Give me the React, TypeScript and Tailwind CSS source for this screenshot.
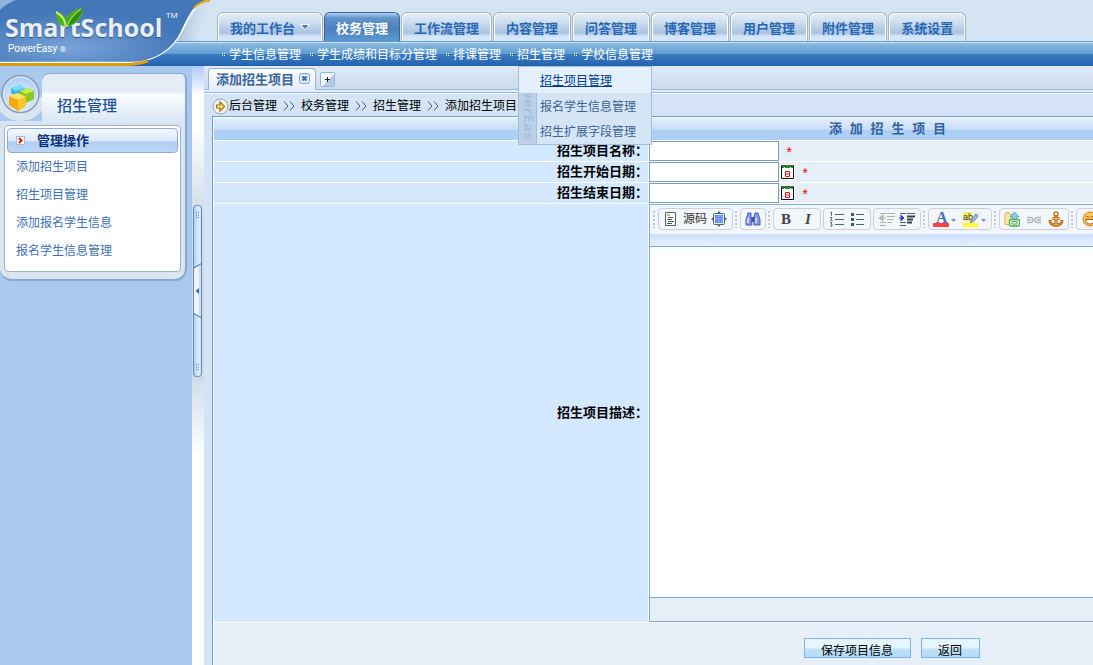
import React from "react";

type Tab = { label: string; active?: boolean; menu?: boolean };

const tabs: Tab[] = [
  { label: "我的工作台", menu: true },
  { label: "校务管理", active: true },
  { label: "工作流管理" },
  { label: "内容管理" },
  { label: "问答管理" },
  { label: "博客管理" },
  { label: "用户管理" },
  { label: "附件管理" },
  { label: "系统设置" },
];

const subnav = ["学生信息管理", "学生成绩和目标分管理", "排课管理", "招生管理", "学校信息管理"];
const sideLinks = ["添加招生项目", "招生项目管理", "添加报名学生信息", "报名学生信息管理"];
const crumbs = ["后台管理", "校务管理", "招生管理", "添加招生项目"];

function Logo() {
  return (
    <div className="relative h-[66px] w-[217px] shrink-0">
      <svg className="absolute left-0 top-0" width="217" height="66" viewBox="0 0 217 66" aria-hidden="true">
        <defs>
          <radialGradient id="sky" cx="0.34" cy="0.75" r="0.55">
            <stop offset="0" stopColor="#78a3d8" />
            <stop offset="1" stopColor="#4377b8" />
          </radialGradient>
          <linearGradient id="shade" x1="0" x2="1" y1="0.3" y2="0.6">
            <stop offset="0" stopColor="#8fb0d0" />
            <stop offset="1" stopColor="#d5e4f2" stopOpacity="0" />
          </linearGradient>
        </defs>
        <path d="M206 2C192 9 187 27 177 41H196C203 28 204 12 210 4Z" fill="url(#shade)" />
        <path d="M0 0H208C190 5 187 23 178 38C167 54 152 62 130 63H0Z" fill="url(#sky)" />
        <path d="M0 0H16C10 2 5 5 0 10Z" fill="#8db3df" />
        <path d="M0 62.5H130C152 62 167 54 178 38C187 23 190 5 208 0" fill="none" stroke="#fff" strokeWidth="1.3" />
        <path d="M0 64.5H128C136 64 142 63 148 61" fill="none" stroke="#dd9b0e" strokeWidth="3" />
        <path d="M194 8C199 3 204 1 210 0.5" fill="none" stroke="#e8a91c" strokeWidth="2" />
      </svg>
      <div className="absolute left-[5px] top-[9px] whitespace-nowrap font-['Open_Sans',sans-serif] text-[25px] font-bold leading-9 text-[#eceff2] [text-shadow:0_1px_1px_#2d5588]">
        SmartSchool
      </div>
      <svg className="absolute left-[55px] top-[7px]" width="29" height="24" viewBox="0 0 29 24" aria-hidden="true">
        <path d="M1 5C5 6 10 8 11 13C12 8 18 2 28 1C27 11 21 19 10 20C4 18 1 13 1 5Z" fill="#4db417" />
        <path d="M11 19C12 11 19 4 28 1C25 11 19 18 11 19Z" fill="#2f8e12" />
        <path d="M1 5C7 8 10 13 11 20" fill="none" stroke="#c8f06a" strokeWidth="2" />
        <path d="M12 19C14 12 19 7 26 2" fill="none" stroke="#9ee04d" strokeWidth="1.5" />
      </svg>
      <div className="absolute left-[166px] top-[9px] font-['Open_Sans',sans-serif] text-[8px] leading-3 text-white">TM</div>
      <div className="absolute left-2 top-[43px] font-['Roboto',sans-serif] text-[10px] leading-3 text-white">
        PowerEasy <span className="text-[8px]">®</span>
      </div>
    </div>
  );
}

function Splitter() {
  return (
    <div className="w-3 shrink-0 bg-white">
      <div className="h-[390px] w-full bg-[linear-gradient(to_bottom,#b0c9fb_0,#ffffff_30px,#ffffff_60px,#cddce6_150px,#cfdde8_310px,#ffffff_390px)] px-px pt-[139px]">
        <button aria-label="收起侧栏" className="block">
          <svg width="9" height="172" viewBox="0 0 9 172">
            <defs>
              <linearGradient id="bar" x1="0" x2="1">
                <stop offset="0" stopColor="#a9cdf6" />
                <stop offset="0.7" stopColor="#e0effd" />
                <stop offset="1" stopColor="#c4def9" />
              </linearGradient>
            </defs>
            <rect x="0.5" y="0.5" width="8" height="171" rx="3" fill="url(#bar)" stroke="#5e89bd" />
            <path d="M1 63L8 59V113L1 109Z" fill="#edf4fd" />
            <path d="M6 62L8 60V112L6 110Z" fill="#c8dcf4" />
            <path d="M1 63L8.500 58.500M1 108.500L8.500 113" fill="none" stroke="#5e89bd" strokeWidth="1.3" />
            <path d="M6 83V89L2.500 86Z" fill="#3d6ba8" />
            <g fill="#4f86c6">
              <path d="M3 7h1v1h-1zM5 7h1v1h-1zM3 9.500h1v1h-1zM5 9.500h1v1h-1zM3 12h1v1h-1zM5 12h1v1h-1z" />
              <path d="M3 159h1v1h-1zM5 159h1v1h-1zM3 161.500h1v1h-1zM5 161.500h1v1h-1zM3 164h1v1h-1zM5 164h1v1h-1z" />
            </g>
          </svg>
        </button>
      </div>
    </div>
  );
}

function Sidebar() {
  return (
    <aside className="w-48 shrink-0 bg-[#a9c8ee] pt-[7px]">
      <div className="relative mr-[5px]">
        <div className="absolute left-0 top-6 h-6 w-[46px] overflow-hidden">
          <div className="-ml-[6px] -mt-[29px] size-[53px] rounded-full bg-[#d9e6f2]" />
        </div>
        <div className="relative ml-[42px] h-12 rounded-tl-lg rounded-tr-md border-r-2 border-t border-[#86a8d3] bg-[linear-gradient(to_bottom,#e4edf6_0,#e4edf6_18px,#fbfdfe_20px,#d9e6f2_48px)] pl-[15px] pt-5 text-[15px] font-medium leading-6 text-[#1f5199]">
          招生管理
        </div>
        <div className="relative rounded-b-xl border-b-2 border-r-2 border-[#86a8d3] bg-[#d9e6f2] px-1 pb-[7px] pt-1">
          <nav className="rounded-sm border border-[#9fb4ca] bg-white px-[2px] pb-[6px] pt-[2px]">
            <h2 className="flex h-[25px] items-center rounded border border-[#8fadd6] bg-[linear-gradient(to_bottom,#f4f8fe_0,#d9e7fb_12px,#b1cef3_13px,#bcd6f6_100%)] pl-2 text-[13px] font-bold text-[#0b3579]">
              <svg width="9" height="9" viewBox="0 0 9 9" className="mr-3 shrink-0" aria-hidden="true">
                <rect x="0.5" y="0.5" width="8" height="8" fill="#fff" stroke="#b8b8b8" />
                <path d="M3 2L5.500 4.500L3 7" fill="none" stroke="#cf1313" strokeWidth="1.8" />
              </svg>
              管理操作
            </h2>
            <ul className="pl-[9px]">
              {sideLinks.map((l) => (
                <li key={l} className="h-7 text-xs leading-[29px] text-[#3c6fb5]">
                  <a href="#">{l}</a>
                </li>
              ))}
            </ul>
          </nav>
        </div>
        <svg className="absolute left-0 top-0" width="42" height="43" viewBox="0 0 42 43" aria-hidden="true">
          <defs>
            <radialGradient id="orb" cx="0.5" cy="0.65" r="0.6">
              <stop offset="0" stopColor="#fbfdff" />
              <stop offset="1" stopColor="#a8cef5" />
            </radialGradient>
          </defs>
          <circle cx="20.500" cy="21" r="18.500" fill="url(#orb)" stroke="#8b9db3" strokeWidth="1.600" />
          <circle cx="20.500" cy="21" r="17" fill="none" stroke="#e8f1fa" />
          <path d="M11 15L20 12L25 15L24 21L14 23L11 20Z" fill="#38b8ec" />
          <path d="M11 15L20 12L25 15L16 18Z" fill="#7bdcfb" />
          <path d="M20 18L28 15L34 18V26L26 30L20 26Z" fill="#8cc91f" />
          <path d="M20 18L28 15L34 18L26 21Z" fill="#c6ee55" />
          <path d="M9 23L18 20L26 24V33L18 38L9 32Z" fill="#f4a80f" />
          <path d="M9 23L18 20L26 24L18 27Z" fill="#ffe467" />
          <path d="M18 27L26 24V33L18 38Z" fill="#fcc62d" />
        </svg>
      </div>
    </aside>
  );
}

function Grip() {
  return (
    <svg width="5" height="18" viewBox="0 0 5 18" className="shrink-0" aria-hidden="true">
      <path d="M2 1V18" stroke="#c3c8cf" strokeWidth="2" strokeDasharray="2 2" />
    </svg>
  );
}

function Group({ children }: { children: React.ReactNode }) {
  return (
    <div className="flex h-[22px] shrink-0 items-center gap-1 rounded-sm border border-[#cdd0d4] bg-[#f3f6fa] px-[5px]">
      {children}
    </div>
  );
}

function Tool({ label, width = 16, children }: { label: string; width?: number; children: React.ReactNode }) {
  return (
    <button type="button" aria-label={label} className="block shrink-0">
      <svg width={width} height="16" viewBox={`0 0 ${width} 16`}>{children}</svg>
    </button>
  );
}

function Toolbar() {
  return (
    <div className="flex h-[29px] items-center gap-px overflow-hidden bg-[#f1f6fc] pb-px pl-[2px]">
      <Grip />
      <Group>
        <button type="button" className="flex items-center gap-[6px] text-xs text-[#333]">
          <svg width="13" height="16" viewBox="0 0 13 16" aria-hidden="true">
            <path d="M1.500 1.500H11.500V14.500H1.500Z" fill="#fff" stroke="#546363" />
            <path d="M3 4H6" stroke="#f29422" strokeWidth="1.500" />
            <path d="M4 6.500H9M3 8.500H8M4 10.500H10M3 12.500H8" stroke="#3e5c57" />
          </svg>
          源码
        </button>
        <Tool label="全选">
          <rect x="2.500" y="2.500" width="11" height="11" rx="1" fill="#e4ecfb" stroke="#4f6a6b" />
          <rect x="4" y="4" width="8" height="8" fill="#4b78e6" />
          <path d="M5 5h6v6H5zM5 8h6M8 5v6" fill="none" stroke="#a9c4ff" strokeWidth="0.8" />
          <path d="M5.500 3L8 0L10.500 3zM5.500 13L8 16L10.500 13zM3 5.500L0 8L3 10.500zM13 5.500L16 8L13 10.500z" fill="#4f6a6b" />
        </Tool>
      </Group>
      <Grip />
      <div className="flex h-[22px] w-[26px] shrink-0 items-center justify-center rounded-sm border border-[#cdd0d4] bg-[#f3f6fa]">
        <Tool label="查找">
          <path d="M3 2H6V6L7 14H1V9ZM10 2H13L15 9V14H9V6Z" fill="#8c9df3" stroke="#4757bd" />
          <path d="M6 6H10V11H6Z" fill="#4757bd" />
          <path d="M3 7V12M11 7V12" stroke="#e5eaff" strokeWidth="1.500" />
          <path d="M5 9V13M13 9V13" stroke="#918d93" />
        </Tool>
      </div>
      <Grip />
      <Group>
        <button type="button" aria-label="粗体" className="w-[14px] font-['Liberation_Serif',serif] text-[15px] font-bold leading-4 text-[#444]">B</button>
        <span className="w-0" />
        <button type="button" aria-label="斜体" className="w-[14px] font-['Liberation_Serif',serif] text-[15px] font-bold italic leading-4 text-[#444]">I</button>
      </Group>
      <span className="w-0" />
      <Group>
        <Tool label="编号列表">
          <path d="M6 3.500H15M6 8.500H15M6 13.500H15" stroke="#4e6867" />
          <path d="M1 2L2.500 1V5M1 6.500H3L1.500 9.500H3.500M1 11.500H3L2 13H3V15H1" fill="none" stroke="#4e6867" strokeWidth="0.9" />
        </Tool>
        <Tool label="项目列表">
          <path d="M7 3.500H15M7 8.500H15M7 13.500H15" stroke="#4e6867" />
          <path d="M2 2h3v3H2zM2 7h3v3H2zM2 12h3v3H2z" fill="#3f5b5a" />
        </Tool>
      </Group>
      <span className="w-0" />
      <Group>
        <Tool label="减少缩进">
          <path d="M1 2.500H7M8 2.500H16M8 5.500H16M8 8.500H14M1 11.500H7M8 11.500H13M1 14.500H7" stroke="#a8adb2" />
          <path d="M0 7L4 4V10ZM4 7H7" fill="#9dc49f" stroke="#9dc49f" />
        </Tool>
        <Tool label="增加缩进">
          <path d="M1 2.500H7M8 2.500H16M1 11.500H7M1 14.500H7" stroke="#4e6060" />
          <path d="M8 5.500H16M8 8.500H14M8 11.500H13" stroke="#344646" strokeWidth="1.800" />
          <path d="M5 7L2 4V10ZM0 7H3" fill="#3c44c4" stroke="#3c44c4" />
        </Tool>
      </Group>
      <Grip />
      <div className="flex h-[22px] shrink-0 items-center gap-[6px] rounded-sm border border-[#cdd0d4] bg-[#f3f6fa] px-1">
        <Tool label="文本颜色" width={24}>
          <text x="3" y="12" fontFamily="Liberation Serif, serif" fontSize="16" fontWeight="bold" fill="#486fb0">A</text>
          <rect x="0" y="12" width="16" height="4" fill="#fb4141" />
          <path d="M18 8H23L20.500 11Z" fill="#6792c8" />
        </Tool>
        <Tool label="背景颜色" width={24}>
          <rect x="0" y="1" width="9" height="9" fill="#f3f06a" />
          <text x="0" y="9" fontFamily="Liberation Sans, sans-serif" fontSize="9" fill="#333">ab</text>
          <path d="M7 12L9 8L13 3L15 5L11 10Z" fill="#a4c0ec" stroke="#65809f" />
          <rect x="0" y="12" width="15" height="4" fill="#fdfb35" />
          <path d="M18 8H23L20.500 11Z" fill="#6792c8" />
        </Tool>
      </div>
      <Grip />
      <div className="flex h-[22px] shrink-0 items-center gap-[6px] rounded-sm border border-[#cdd0d4] bg-[#f3f6fa] px-1">
        <Tool label="超链接">
          <path d="M1 3.500V13.500H10.500V3.500H6L5 1.500H2Z" fill="#fbe6a5" stroke="#d5b765" />
          <path d="M10.500 1L15 6H12.500V9H8.500V6H6Z" fill="#83d0ec" stroke="#4b9fb5" strokeWidth="0.8" />
          <rect x="5.500" y="8.500" width="10" height="6.500" rx="1.500" fill="#e9fbdc" stroke="#53a85a" strokeWidth="1.300" />
          <path d="M8 10.500H13V13H8Z" fill="#fff" stroke="#53a85a" />
        </Tool>
        <Tool label="取消超链接">
          <path d="M1 6.500H4.500A2.200 2.200 0 0 1 4.500 11.500H1M1 9H5M15 6.500H11.500A2.200 2.200 0 0 0 11.500 11.500H15M11 9H15" fill="none" stroke="#b3b5b8" strokeWidth="1.400" />
        </Tool>
        <Tool label="锚点">
          <path d="M8 5V14M4.500 7.500H11.500M2 9C2 12 4.500 14 8 14.500C11.500 14 14 12 14 9" fill="none" stroke="#b56f1c" strokeWidth="3" />
          <circle cx="8" cy="3" r="2" fill="#fff" stroke="#c47a22" strokeWidth="1.500" />
          <path d="M8 6V14M5 7.500H11M2.500 10C3.500 13 5.500 14 8 14C10.500 14 12.500 13 13.500 10" fill="none" stroke="#f4b75e" strokeWidth="1" />
        </Tool>
      </div>
      <Grip />
      <Group>
        <Tool label="表情">
          <circle cx="8" cy="8" r="7" fill="#fdc65a" stroke="#e07c14" />
          <path d="M3.500 8.500H12.500C12 12 10 13 8 13C6 13 4 12 3.500 8.500Z" fill="#fff" stroke="#a45713" />
          <path d="M4 6.500Q5.500 3.500 7 6.500M9 6.500Q10.500 3.500 12 6.500" fill="none" stroke="#8d4b13" />
        </Tool>
        <Tool label="图像">
          <rect x="1.500" y="2.500" width="13" height="11" fill="#bfe0fa" stroke="#5c86ad" />
          <path d="M2 13L6 7L9 10L11 8L14 13Z" fill="#5da852" />
        </Tool>
        <Tool label="表格">
          <path d="M1.500 2.500H14.500V13.500H1.500ZM1.500 6H14.500M1.500 10H14.500M6 2.500V13.500M10 2.500V13.500" fill="#fff" stroke="#5c86ad" />
        </Tool>
      </Group>
    </div>
  );
}

function CalendarButton({ label }: { label: string }) {
  return (
    <button type="button" aria-label={label} className="block shrink-0 bg-white">
      <svg width="15" height="16" viewBox="0 0 15 16">
        <path d="M1.500 1.500H13.500V14.500H1.500Z" fill="#fff" stroke="#111" />
        <rect x="1" y="1" width="12" height="1" fill="#555" />
        <rect x="2" y="2" width="11" height="1" fill="#149a20" />
        <path d="M2 3h2v1h-2zM5 3h5v1h-5zM11 3h2v1h-2z" fill="#149a20" />
        <path d="M4 2h1v1h-1zM10 2h1v1h-1z" fill="#074d0c" />
        <path d="M5.500 7.500H9.500V12.500H5.500ZM5.500 10H9.500" fill="none" stroke="#e8141c" />
      </svg>
    </button>
  );
}

function Required() {
  return (
    <span className="ml-[6px] pt-[5px] font-['Liberation_Mono',monospace] text-[14px] leading-4 text-[#f00]">*</span>
  );
}

const labelCell = "bg-[#d4e9ff] p-0 text-right text-[13px] font-bold leading-5 text-black";
const fieldCell = "bg-[#e6eef7] p-0";
const inputBox = "h-5 w-[130px] border border-[#7b9ebd] bg-white px-1 text-xs outline-none";
const actionButton =
  "h-5 border border-[#7fb3e4] bg-[linear-gradient(to_bottom,#e9f7fd_0,#e2f4fc_9px,#bfe2f7_10px,#b2dbf8_100%)] pt-1 text-xs leading-4 text-black";

function ProjectForm() {
  return (
    <table className="w-full min-w-[1350px] table-fixed border-separate border-spacing-px border-l border-t border-[#6f9dce] bg-white">
      <colgroup>
        <col className="w-[434px]" />
        <col />
      </colgroup>
      <thead>
        <tr>
          <th
            colSpan={2}
            className="h-[22px] bg-[linear-gradient(to_bottom,#e4effb_0,#c6dcf5_12px,#aecff4_12px,#aecff4_100%)] p-0 pt-px text-center font-['Liberation_Mono','Noto_Sans_CJK_SC',monospace] text-[13px] font-bold leading-5 text-[#3160a3]"
          >
            添 加 招 生 项 目
          </th>
        </tr>
      </thead>
      <tbody>
        <tr>
          <th scope="row" className={labelCell}><label htmlFor="name">招生项目名称：</label></th>
          <td className={fieldCell}>
            <div className="flex h-5 items-center">
              <input id="name" className={inputBox} />
              <Required />
            </div>
          </td>
        </tr>
        <tr>
          <th scope="row" className={labelCell}><label htmlFor="start">招生开始日期：</label></th>
          <td className={fieldCell}>
            <div className="flex h-5 items-center">
              <input id="start" className={`${inputBox} mr-px`} />
              <CalendarButton label="选择开始日期" />
              <Required />
            </div>
          </td>
        </tr>
        <tr>
          <th scope="row" className={labelCell}><label htmlFor="end">招生结束日期：</label></th>
          <td className={fieldCell}>
            <div className="flex h-5 items-center">
              <input id="end" className={`${inputBox} mr-px`} />
              <CalendarButton label="选择结束日期" />
              <Required />
            </div>
          </td>
        </tr>
        <tr>
          <th scope="row" className={labelCell}><label htmlFor="desc">招生项目描述：</label></th>
          <td className={fieldCell}>
            <div className="border border-[#7cabd3]">
              <Toolbar />
              <div className="h-3 bg-[linear-gradient(to_bottom,#cce1ff,#e6effb)]" />
              <textarea id="desc" className="block h-[352px] w-full resize-none border-y border-[#7cabd3] bg-white p-2 text-xs outline-none" />
              <div className="h-[23px]" />
            </div>
          </td>
        </tr>
        <tr>
          <td colSpan={2} className="h-[60px] bg-[#e6eef7] p-0 align-top">
            <div className="flex justify-center gap-[10px] pl-2 pt-[15px]">
              <button type="button" className={`${actionButton} w-[107px]`}>保存项目信息</button>
              <button type="button" className={`${actionButton} w-[59px]`}>返回</button>
            </div>
          </td>
        </tr>
      </tbody>
    </table>
  );
}

function DropMenu() {
  return (
    <div className="absolute left-[9px] top-[23px] z-10 flex w-[134px] border border-[#a0bfdd] bg-[#d4e5f6]">
      <div className="w-[18px] shrink-0 overflow-hidden border-r border-[#a0bfdd] bg-[#bdd2e8]" aria-hidden="true">
        <span className="block pt-5 font-['DejaVu_Sans',sans-serif] text-[13px] font-bold leading-[18px] text-[#a7c2df] [writing-mode:vertical-rl]">
          werEas
        </span>
      </div>
      <ul className="absolute inset-x-0 top-0 text-xs text-[#3f618f]">
        <li className="h-[26px] bg-[#e4f1fd] pl-[21px] leading-[29px]">
          <a href="#" className="text-[#003c94] underline">招生项目管理</a>
        </li>
        <li className="h-[25px] pl-[21px] leading-[28px]"><a href="#">报名学生信息管理</a></li>
        <li className="h-[25px] pl-[21px] leading-[28px]"><a href="#">招生扩展字段管理</a></li>
      </ul>
      <div className="h-[77px]" />
    </div>
  );
}

export default function App() {
  return (
    <div lang="zh-CN" className="flex h-screen flex-col overflow-hidden bg-[#d4e3f6] font-['Liberation_Sans','Noto_Sans_CJK_SC',sans-serif]">
      <header className="flex h-[66px] shrink-0 bg-[linear-gradient(to_bottom,#d5e4f2_0,#d5e4f2_41px,#5b9bd1_41px,#5b9bd1_42px,#d0e2f2_42px,#d0e2f2_43px,#8bbbe1_43px,#5f9cd2_54px,#3a7cc0_54px,#2462ae_66px)]">
        <Logo />
        <div className="flex flex-col">
          <nav className="flex gap-px pt-3">
            {tabs.map((t) => (
              <a
                key={t.label}
                href="#"
                className={
                  t.active
                    ? "flex h-[29px] shrink-0 items-center rounded-t-md border border-b-0 border-[#3b639b] bg-[linear-gradient(to_bottom,#b5d2ee_0,#6294ca_5px,#4a80bd_16px,#5c9bd3_29px)] px-[11px] pt-1 text-[13px] font-bold text-white"
                    : "flex h-[29px] shrink-0 items-center gap-[5px] rounded-t-md border border-b-0 border-[#a3b3c2] bg-[linear-gradient(to_bottom,#e6eef8_0,#cbdcee_10px,#a8c3e2_20px,#d3e3f7_23px,#dbe8f8_29px)] px-3 pt-1 text-[13px] font-bold text-[#2768b4] shadow-[inset_1px_1px_0_#fff,inset_-1px_0_0_#fff]"
                }
              >
                {t.label}
                {t.menu && (
                  <svg width="10" height="6" viewBox="0 0 10 6" className="mb-1" aria-hidden="true">
                    <path d="M0.500 0.500H9.500L5 5.500Z" fill="#4a7ab5" stroke="#fff" />
                  </svg>
                )}
              </a>
            ))}
          </nav>
          <nav className="mt-[2px] flex gap-2 pl-1">
            {subnav.map((s) => (
              <div key={s} className="relative flex h-[23px] items-center">
                <svg width="8" height="4" viewBox="0 0 8 4" aria-hidden="true">
                  <path d="M1 0h1v1h-1zM3 0h1v1h-1zM1 2h1v1h-1zM3 2h1v1h-1z" fill="#fff" />
                </svg>
                <a href="#" className="text-xs text-white">{s}</a>
                {s === "招生管理" && <DropMenu />}
              </div>
            ))}
          </nav>
        </div>
      </header>

      <div className="flex min-h-0 flex-1">
        <Sidebar />
        <Splitter />
        <main className="min-w-0 flex-1 overflow-auto bg-[#d4e3f6] [scrollbar-width:none]">
          <div className="flex h-6 items-end border-b border-[#9abae4] bg-[linear-gradient(to_bottom,#e0e8f5,#cddbee)] pl-1">
            <div className="-mb-px flex h-[22px] items-center rounded-t-sm border border-b-0 border-[#8fb3e2] bg-[linear-gradient(to_bottom,#ffffff,#e3edfb)] pl-[7px] pr-[5px] text-[13px] font-bold text-[#3a649c]">
              添加招生项目
              <button aria-label="关闭标签" className="mb-[2px] ml-[5px]">
                <svg width="11" height="11" viewBox="0 0 11 11">
                  <rect x="0.500" y="0.500" width="10" height="10" rx="2" fill="#dceafa" stroke="#7ba3d2" />
                  <path d="M3.500 3.500L7.500 7.500M7.500 3.500L3.500 7.500" stroke="#426ea8" strokeWidth="2" />
                </svg>
              </button>
            </div>
            <button aria-label="新建标签" className="mb-[2px] ml-1">
              <svg width="15" height="15" viewBox="0 0 15 15">
                <rect x="0.500" y="0.500" width="14" height="14" rx="1" fill="#f3f8fe" stroke="#8fb3e2" />
                <path d="M14 2V14H3Z" fill="#b9cbe2" />
                <path d="M5 7.500H10M7.500 5V10" stroke="#222" />
              </svg>
            </button>
          </div>
          <div className="h-1 border-b border-white bg-[linear-gradient(to_bottom,#e3edfb_0,#e3edfb_2px,#8fb6ea_2px)]" />
          <div className="flex h-[22px] items-center pl-2 pt-[2px] text-xs text-black">
            <svg width="17" height="17" viewBox="0 0 17 17" className="shrink-0" aria-hidden="true">
              <circle cx="8.500" cy="8.500" r="7.500" fill="#f2f3f5" stroke="#9c9fa8" />
              <path d="M4.500 7H8V4L12.500 8.500L8 13V10H4.500Z" fill="#ffe68a" stroke="#a0700d" strokeWidth="1.200" />
            </svg>
            {crumbs.map((c, i) => (
              <React.Fragment key={c}>
                {i > 0 && (
                  <svg width="24" height="10" viewBox="0 0 24 10" aria-hidden="true">
                    <path d="M7 0.500L11 5L7 9.500M13 0.500L17 5L13 9.500" fill="none" stroke="#4c5870" />
                  </svg>
                )}
                <a href="#">{c}</a>
              </React.Fragment>
            ))}
          </div>
          <div className="pl-2">
            <ProjectForm />
          </div>
        </main>
      </div>
    </div>
  );
}
